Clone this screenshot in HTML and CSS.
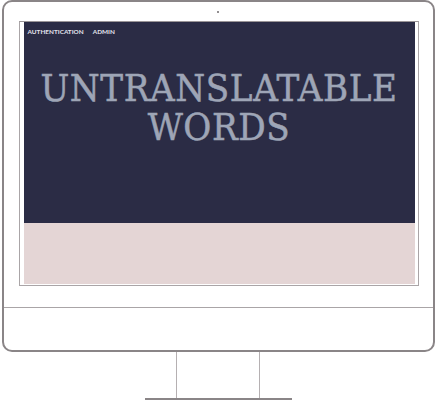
FILE: index.html
```html
<!DOCTYPE html>
<html>
<head>
<meta charset="utf-8">
<link rel="stylesheet" href="styles.css">
</head>
<body>
<div class="device">
  <div class="monitor">
    <div class="camera"></div>
    <div class="screen">
      <div class="page">
        <header class="hero">
          <nav class="nav">
            <a class="nav-link">AUTHENTICATION</a>
            <a class="nav-link">ADMIN</a>
          </nav>
          <h1 class="title">UNTRANSLATABLE<br>WORDS</h1>
        </header>
        <section class="band"></section>
      </div>
    </div>
    <div class="chin"></div>
  </div>
  <div class="stand">
    <div class="neck"></div>
    <div class="base"></div>
  </div>
</div>
</body>
</html>
```
FILE: styles.css
```css
html, body {
  margin: 0;
  padding: 0;
  background: #ffffff;
}
.device {
  width: 435px;
  height: 400px;
  display: flex;
  flex-direction: column;
  align-items: center;
}
.monitor {
  box-sizing: border-box;
  width: 433px;
  height: 352px;
  margin-left: 1px;
  border: 2px solid #8a8587;
  border-radius: 10px;
  display: flex;
  flex-direction: column;
}
.camera {
  width: 2px;
  height: 2px;
  background: #6f6a6c;
  border-radius: 50%;
  margin: 9px auto 8px;
}
.screen {
  box-sizing: border-box;
  width: 400px;
  height: 265px;
  margin-left: 15px;
  border: 1px solid #aaa5a7;
  border-top-color: #9a9597;
  padding: 0 3px 1px 4px;
}
.page {
  height: 100%;
  display: flex;
  flex-direction: column;
}
.hero {
  height: 201px;
  background: #2b2c45;
  display: flex;
  flex-direction: column;
}
.nav {
  display: flex;
  gap: 9px;
  padding: 5px 0 0 4px;
}
.nav-link {
  font-family: Lato, "Open Sans", sans-serif;
  font-weight: 700;
  font-size: 6.4px;
  color: #e4e4ee;
  letter-spacing: 0;
  line-height: 9px;
}
.title {
  margin: 33px 0 0 0;
  font-family: "DejaVu Serif Condensed", "DejaVu Serif", serif;
  font-stretch: condensed;
  font-weight: 400;
  font-size: 38px;
  line-height: 39px;
  letter-spacing: 0.6px;
  color: #9ea5b6;
  -webkit-text-stroke: 0.5px #9ea5b6;
  text-align: center;
}
.band {
  flex: 1;
  background: #e4d5d5;
}
.chin {
  margin-top: 21px;
  border-top: 1px solid #aaa5a7;
}
.stand {
  width: 435px;
  height: 48px;
  display: flex;
  flex-direction: column;
  align-items: center;
}
.neck {
  box-sizing: border-box;
  width: 84px;
  height: 46px;
  margin-left: 1px;
  border-left: 1px solid #b5b0b2;
  border-right: 1px solid #b5b0b2;
}
.base {
  width: 147px;
  height: 2px;
  background: #8a8587;
  margin-left: 1px;
}
```
